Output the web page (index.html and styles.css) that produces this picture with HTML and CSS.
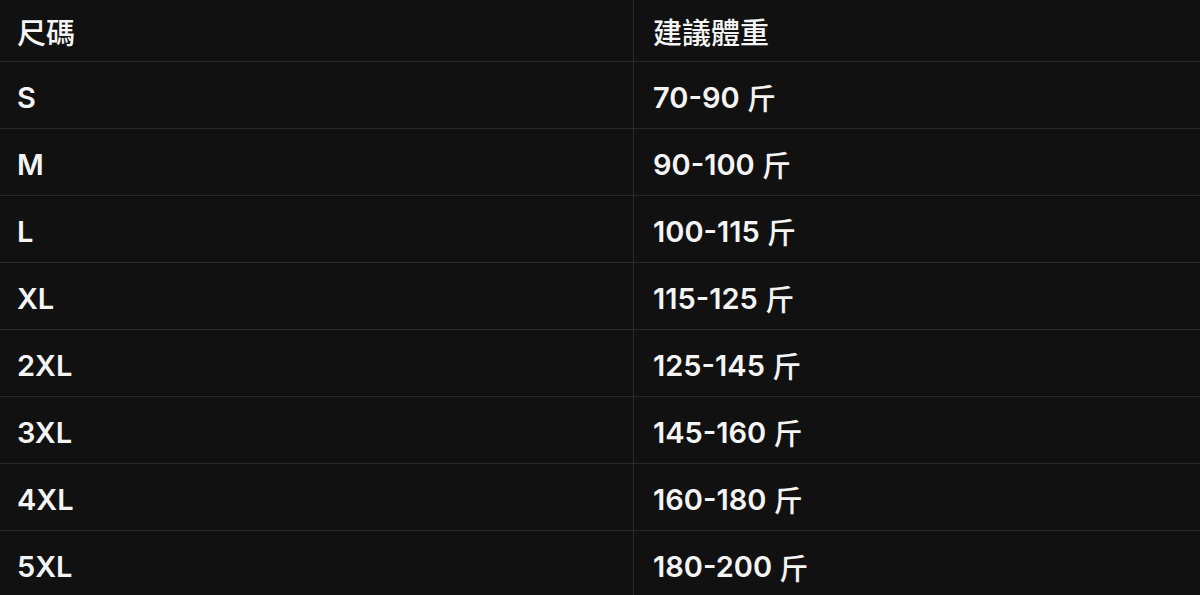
FILE: index.html
```html
<!DOCTYPE html>
<html lang="zh-Hant">
<head>
<meta charset="utf-8">
<link rel="stylesheet" href="styles.css">
</head>
<body>
<div class="table">
  <div class="row head"><div class="cell c1"><span class="zh">尺碼</span></div><div class="cell c2"><span class="zh">建議體重</span></div></div>
  <div class="row"><div class="cell c1">S</div><div class="cell c2">70-90&nbsp;<span class="zh">斤</span></div></div>
  <div class="row"><div class="cell c1">M</div><div class="cell c2">90-100&nbsp;<span class="zh">斤</span></div></div>
  <div class="row"><div class="cell c1">L</div><div class="cell c2">100-115&nbsp;<span class="zh">斤</span></div></div>
  <div class="row"><div class="cell c1">XL</div><div class="cell c2">115-125&nbsp;<span class="zh">斤</span></div></div>
  <div class="row"><div class="cell c1">2XL</div><div class="cell c2">125-145&nbsp;<span class="zh">斤</span></div></div>
  <div class="row"><div class="cell c1">3XL</div><div class="cell c2">145-160&nbsp;<span class="zh">斤</span></div></div>
  <div class="row"><div class="cell c1">4XL</div><div class="cell c2">160-180&nbsp;<span class="zh">斤</span></div></div>
  <div class="row"><div class="cell c1">5XL</div><div class="cell c2">180-200&nbsp;<span class="zh">斤</span></div></div>
</div>
</body>
</html>
```
FILE: styles.css
```css
html, body {
  margin: 0;
  padding: 0;
  background: #111111;
  overflow: hidden;
}
body {
  width: 1200px;
  height: 595px;
  font-family: Inter, "Noto Sans CJK TC", sans-serif;
  font-weight: 600;
  font-size: 29px;
  color: #f4f4f4;
}
.zh {
  font-weight: 500;
}
.table {
  display: flex;
  flex-direction: column;
}
.row {
  display: grid;
  grid-template-columns: 634px 1fr;
  height: 67px;
  border-bottom: 1px solid #2a2a2a;
  box-sizing: border-box;
}
.row.head {
  height: 62px;
}
.row:last-child {
  border-bottom: none;
}
.cell {
  display: flex;
  align-items: center;
  padding-top: 4px;
  white-space: pre;
}
.c1 {
  padding-left: 17px;
  border-right: 1px solid #2a2a2a;
}
.c2 {
  padding-left: 19px;
}
.head .cell {
  padding-top: 0;
}
```
